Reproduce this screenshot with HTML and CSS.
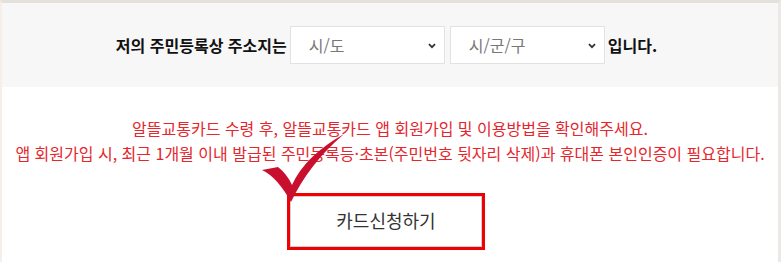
FILE: index.html
```html
<!DOCTYPE html>
<html lang="ko">
<head>
<meta charset="utf-8">
<link rel="stylesheet" href="styles.css">
</head>
<body>
<div class="frame">
  <div class="address-panel">
    <span class="label">저의 주민등록상 주소지는</span>
    <div class="select-wrap sido">
      <select class="select"><option>시/도</option></select>
      <svg class="chev" width="8" height="6" viewBox="0 0 8 6"><path d="M1 1.2 L4 4.2 L7 1.2" fill="none" stroke="#333" stroke-width="1.8"/></svg>
    </div>
    <div class="select-wrap sigungu">
      <select class="select"><option>시/군/구</option></select>
      <svg class="chev" width="8" height="6" viewBox="0 0 8 6"><path d="M1 1.2 L4 4.2 L7 1.2" fill="none" stroke="#333" stroke-width="1.8"/></svg>
    </div>
    <span class="label">입니다.</span>
  </div>
  <div class="notice">
    <p>알뜰교통카드 수령 후, 알뜰교통카드 앱 회원가입 및 이용방법을 확인해주세요.</p>
    <p>앱 회원가입 시, 최근 1개월 이내 발급된 주민등록등·초본(주민번호 뒷자리 삭제)과 휴대폰 본인인증이 필요합니다.</p>
  </div>
  <div class="action">
    <button class="apply-btn">카드신청하기</button>
  </div>
  <svg class="check" width="90" height="80" viewBox="0 0 90 80">
    <path d="M5 42 Q20 49 34 74 Q52 36 87 6 Q48 28 35 57 Q30 46 21 39 Z" fill="#c8102e"/>
  </svg>
</div>
</body>
</html>
```
FILE: styles.css
```css
html, body {
  margin: 0;
  padding: 0;
  background: #ffffff;
}
body {
  width: 781px;
  height: 262px;
  overflow: hidden;
  font-family: "Noto Sans CJK KR", "Noto Sans", sans-serif;
}
.frame {
  position: relative;
  height: 259px;
  border-top: 3px solid #e4e1dd;
  border-left: 2px solid #f6eee8;
  border-right: 3px solid #ebe8e6;
  box-sizing: content-box;
  width: 776px;
}
.address-panel {
  height: 84px;
  background: #f7f7f7;
  display: flex;
  align-items: center;
  justify-content: center;
  padding-right: 7px;
  box-sizing: border-box;
}
.label {
  font-size: 16px;
  font-weight: 700;
  color: #111;
}
.select-wrap {
  position: relative;
  width: 155px;
  height: 38px;
  margin-left: 3px;
}
.select-wrap.sigungu {
  margin-left: 5px;
  margin-right: 3px;
}
.select {
  appearance: none;
  -webkit-appearance: none;
  width: 100%;
  height: 100%;
  border: 1px solid #e2e2e2;
  background: #ffffff;
  padding: 0 0 0 18px;
  font-family: "Noto Sans CJK KR", sans-serif;
  font-size: 16px;
  color: #777;
  border-radius: 0;
  outline: none;
}
.chev {
  position: absolute;
  right: 9px;
  top: 17px;
  pointer-events: none;
}
.notice {
  padding-top: 29px;
  text-align: center;
  color: #e5262d;
  font-size: 16px;
}
.notice p {
  margin: 0;
  line-height: 25px;
}
.action {
  display: flex;
  justify-content: center;
  padding-top: 27px;
  padding-right: 8px;
}
.apply-btn {
  width: 198px;
  height: 57px;
  border: 3px solid #f00000;
  box-shadow: inset 0 0 0 1px #c9d0d6;
  background: #ffffff;
  font-family: "Noto Sans CJK KR", sans-serif;
  font-size: 18px;
  color: #333;
  padding: 0 0 3px 0;
}
.check {
  position: absolute;
  left: 255px;
  top: 125px;
}
```
